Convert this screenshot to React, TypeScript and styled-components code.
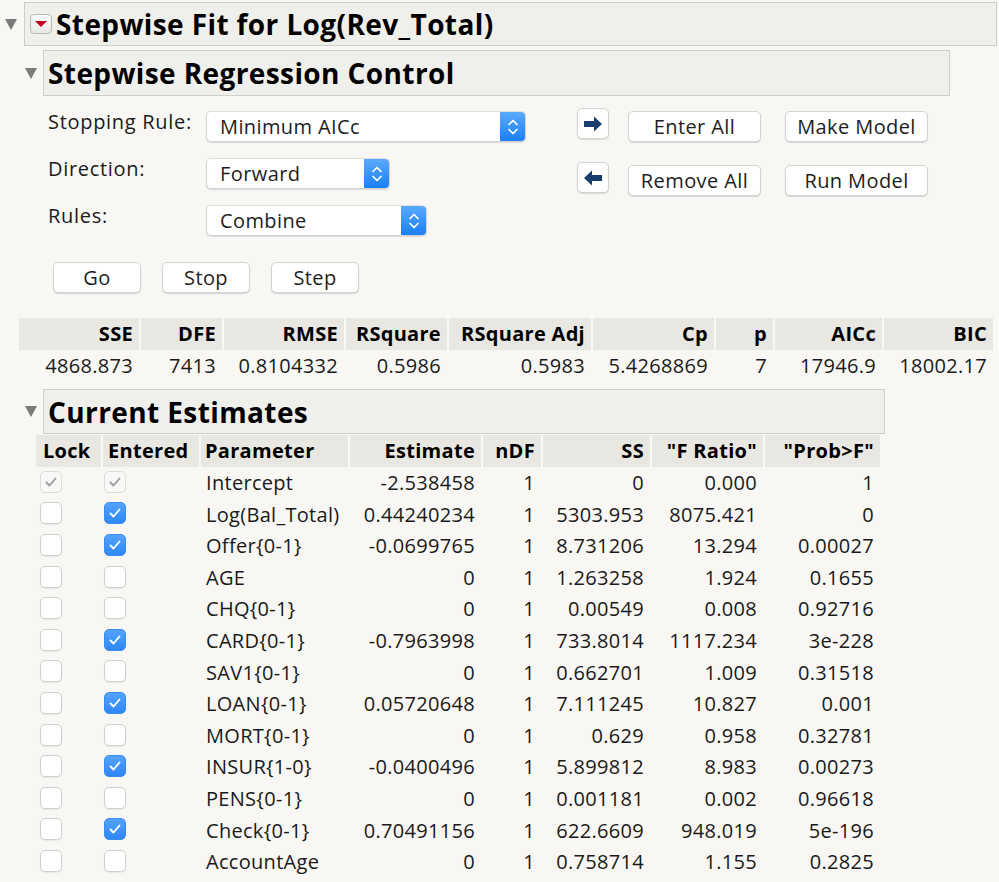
import React from "react";
import styled, { createGlobalStyle } from "styled-components";

const Global = createGlobalStyle`
  html, body { margin: 0; padding: 0; background: #f8f7f3; }
  body { font-family: "Open Sans", Lato, "Noto Sans", sans-serif; color: #111; }
  * { box-sizing: border-box; }
`;

const Page = styled.div`
  width: 999px;
  height: 882px;
  overflow: hidden;
  padding-top: 2px;
`;

const OutlineHead = styled.div<{ $indent: number }>`
  display: flex;
  align-items: center;
  margin-left: ${(p) => p.$indent}px;
`;

const Disclosure = styled.span<{ $gap: number }>`
  width: 0;
  height: 0;
  border-left: 6px solid transparent;
  border-right: 6px solid transparent;
  border-top: 11px solid #7b7b7b;
  margin-right: ${(p) => p.$gap}px;
  flex: none;
`;

const TitleBox = styled.div<{ $w: number; $h: number; $pad: number }>`
  width: ${(p) => p.$w}px;
  height: ${(p) => p.$h}px;
  padding-left: ${(p) => p.$pad}px;
  display: flex;
  align-items: center;
  gap: 4px;
  background: #efefeb;
  border: 1px solid #cfcfca;
  font-weight: 700;
  font-size: 28px;
  letter-spacing: 0.4px;
  color: #000;
  white-space: nowrap;
`;

const MenuIcon = styled.span`
  width: 22px;
  height: 20px;
  border: 1px solid #b9b9b6;
  border-radius: 4px;
  background: linear-gradient(#fbfbfb, #e9e9e7);
  display: flex;
  align-items: center;
  justify-content: center;
  flex: none;
  &::after {
    content: "";
    width: 0;
    height: 0;
    border-left: 6px solid transparent;
    border-right: 6px solid transparent;
    border-top: 6px solid #c4001c;
  }
`;

const Controls = styled.div`
  display: flex;
  align-items: flex-start;
  margin-left: 48px;
  padding-top: 15px;
`;

const Settings = styled.div`
  display: grid;
  grid-template-columns: 158px auto;
  grid-auto-rows: 31px;
  row-gap: 16px;
  width: 529px;
`;

const Label = styled.div`
  font-size: 20px;
  letter-spacing: 0.7px;
  line-height: 22px;
  color: #1a1a1a;
  margin-top: 0;
`;

const Select = styled.div<{ $w: number }>`
  width: ${(p) => p.$w}px;
  height: 31px;
  display: flex;
  background: #fff;
  border-radius: 5px;
  border: 1px solid #d3d3d3;
  border-top-color: #dedede;
  box-shadow: 0 1px 1px rgba(0, 0, 0, 0.12);
  overflow: hidden;
`;

const SelectText = styled.div`
  flex: 1;
  padding-left: 13px;
  font-size: 20px;
  letter-spacing: 0.4px;
  line-height: 29px;
  color: #1d1d1d;
`;

const Stepper = styled.div`
  width: 25px;
  background: linear-gradient(#5aaafc, #1b7ff6);
  display: flex;
  align-items: center;
  justify-content: center;
`;

const Actions = styled.div`
  display: grid;
  grid-template-columns: 32px 152px 186px;
  grid-auto-rows: 34px;
  align-content: start;
  row-gap: 20px;
  margin-top: -3px;
  align-items: start;
`;

const ArrowButton = styled.div`
  width: 32px;
  height: 31px;
  background: #fff;
  border: 1px solid #d3d3d3;
  border-radius: 5px;
  box-shadow: 0 1px 1px rgba(0, 0, 0, 0.12);
  display: flex;
  align-items: center;
  justify-content: center;
`;

const Button = styled.div<{ $w: number; $ml?: number; $mt?: number }>`
  width: ${(p) => p.$w}px;
  height: 31px;
  margin-left: ${(p) => p.$ml ?? 0}px;
  margin-top: ${(p) => p.$mt ?? 0}px;
  background: #fff;
  border: 1px solid #d3d3d3;
  border-radius: 5px;
  box-shadow: 0 1px 1px rgba(0, 0, 0, 0.14);
  font-size: 20px;
  letter-spacing: 0.4px;
  line-height: 29px;
  text-align: center;
  color: #1d1d1d;
  white-space: nowrap;
`;

const RunRow = styled.div`
  display: flex;
  gap: 21px;
  margin: 26px 0 0 53px;
`;

const Grid = styled.div<{ $cols: string; $left: number; $top: number }>`
  display: grid;
  grid-template-columns: ${(p) => p.$cols};
  column-gap: 2px;
  margin-left: ${(p) => p.$left}px;
  margin-top: ${(p) => p.$top}px;
`;

const HeadCell = styled.div<{ $align?: string; $pad?: number }>`
  height: 32px;
  background: #e8e7e1;
  font-weight: 700;
  font-size: 20px;
  letter-spacing: 0.3px;
  line-height: 32px;
  color: #000;
  text-align: ${(p) => p.$align ?? "right"};
  padding: 0 ${(p) => (p.$align === "left" ? 0 : 6)}px 0 ${(p) => p.$pad ?? 0}px;
  white-space: nowrap;
  overflow: hidden;
`;

const Cell = styled.div<{ $align?: string; $pad?: number; $h?: number }>`
  height: ${(p) => p.$h ?? 31.6}px;
  font-size: 20px;
  letter-spacing: 0.3px;
  line-height: ${(p) => p.$h ?? 31.6}px;
  color: #1a1a1a;
  padding: 0 ${(p) => (p.$align === "left" ? 0 : 6)}px 0 ${(p) => p.$pad ?? 0}px;
  white-space: nowrap;
  display: flex;
  align-items: center;
  justify-content: ${(p) => (p.$align === "left" ? "flex-start" : "flex-end")};
`;

const Box = styled.span<{ $state: "off" | "on" | "dis" }>`
  width: 22px;
  height: 22px;
  border-radius: 5px;
  display: inline-flex;
  align-items: center;
  justify-content: center;
  background: ${(p) => (p.$state === "on" ? "linear-gradient(#54a3fb, #2f87f6)" : p.$state === "dis" ? "#f8f8f7" : "#fff")};
  border: 1px solid ${(p) => (p.$state === "on" ? "#3a8cf0" : p.$state === "dis" ? "#dcdcda" : "#cfcfcf")};
  box-shadow: ${(p) => (p.$state === "off" ? "0 1px 1px rgba(0,0,0,0.06)" : "none")};
  margin-top: -2px;
`;

const Spacer = styled.div`
  height: 4px;
`;

const StepperIcon = () => (
  <svg width="14" height="22" viewBox="0 0 14 22" fill="none" stroke="#fff" strokeWidth="1.7" strokeLinecap="round" strokeLinejoin="round">
    <path d="M3 8.5l4-4 4 4" />
    <path d="M3 13.5l4 4 4-4" />
  </svg>
);

const ArrowIcon = ({ dir }: { dir: "right" | "left" }) => (
  <svg width="20" height="16" viewBox="0 0 20 16" style={dir === "left" ? { transform: "scaleX(-1)" } : undefined}>
    <path d="M1 5h10V0.5l8 7.5-8 7.5V11H1z" fill="#173e6d" />
  </svg>
);

const Check = ({ color }: { color: string }) => (
  <svg width="16" height="16" viewBox="0 0 16 16" fill="none" stroke={color} strokeWidth="1.9" strokeLinecap="round" strokeLinejoin="round">
    <path d="M3.5 8.5l3 3 6-7" />
  </svg>
);

const CheckBox = ({ state }: { state: "off" | "on" | "dis" }) => (
  <Box $state={state}>
    {state === "on" && <Check color="#fff" />}
    {state === "dis" && <Check color="#9c9c9c" />}
  </Box>
);

const DropDown = ({ w, text }: { w: number; text: string }) => (
  <Select $w={w}>
    <SelectText>{text}</SelectText>
    <Stepper>
      <StepperIcon />
    </Stepper>
  </Select>
);

const statCols = "120px 81px 120px 101px 142px 121px 57px 107px 109px";
const statHeads = ["SSE", "DFE", "RMSE", "RSquare", "RSquare Adj", "Cp", "p", "AICc", "BIC"];
const statVals = ["4868.873", "7413", "0.8104332", "0.5986", "0.5983", "5.4268869", "7", "17946.9", "18002.17"];

const estCols = "65px 96px 147px 131px 58px 107px 111px 115px";

type Row = [boolean | null, string, string, string, string, string];
const rows: Row[] = [
  [null, "Intercept", "-2.538458", "0", "0.000", "1"],
  [true, "Log(Bal_Total)", "0.44240234", "5303.953", "8075.421", "0"],
  [true, "Offer{0-1}", "-0.0699765", "8.731206", "13.294", "0.00027"],
  [false, "AGE", "0", "1.263258", "1.924", "0.1655"],
  [false, "CHQ{0-1}", "0", "0.00549", "0.008", "0.92716"],
  [true, "CARD{0-1}", "-0.7963998", "733.8014", "1117.234", "3e-228"],
  [false, "SAV1{0-1}", "0", "0.662701", "1.009", "0.31518"],
  [true, "LOAN{0-1}", "0.05720648", "7.111245", "10.827", "0.001"],
  [false, "MORT{0-1}", "0", "0.629", "0.958", "0.32781"],
  [true, "INSUR{1-0}", "-0.0400496", "5.899812", "8.983", "0.00273"],
  [false, "PENS{0-1}", "0", "0.001181", "0.002", "0.96618"],
  [true, "Check{0-1}", "0.70491156", "622.6609", "948.019", "5e-196"],
  [false, "AccountAge", "0", "0.758714", "1.155", "0.2825"],
];

export default function App() {
  return (
    <Page>
      <Global />
      <OutlineHead $indent={5}>
        <Disclosure $gap={7} />
        <TitleBox $w={973} $h={44} $pad={5}>
          <MenuIcon />
          Stepwise Fit for Log(Rev_Total)
        </TitleBox>
      </OutlineHead>
      <Spacer />
      <OutlineHead $indent={25}>
        <Disclosure $gap={6} />
        <TitleBox $w={907} $h={46} $pad={4}>
          Stepwise Regression Control
        </TitleBox>
      </OutlineHead>
      <Controls>
        <Settings>
          <Label>Stopping Rule:</Label>
          <DropDown w={320} text="Minimum AICc" />
          <Label>Direction:</Label>
          <DropDown w={184} text="Forward" />
          <Label>Rules:</Label>
          <DropDown w={221} text="Combine" />
        </Settings>
        <Actions>
          <ArrowButton>
            <ArrowIcon dir="right" />
          </ArrowButton>
          <Button $w={133} $ml={19} $mt={3}>Enter All</Button>
          <Button $w={143} $ml={24} $mt={3}>Make Model</Button>
          <ArrowButton>
            <ArrowIcon dir="left" />
          </ArrowButton>
          <Button $w={133} $ml={19} $mt={3}>Remove All</Button>
          <Button $w={143} $ml={24} $mt={3}>Run Model</Button>
        </Actions>
      </Controls>
      <RunRow>
        <Button $w={88}>Go</Button>
        <Button $w={88}>Stop</Button>
        <Button $w={88}>Step</Button>
      </RunRow>
      <Grid $cols={statCols} $left={19} $top={25}>
        {statHeads.map((h) => (
          <HeadCell key={h}>{h}</HeadCell>
        ))}
        {statVals.map((v, i) => (
          <Cell key={i} $h={31}>{v}</Cell>
        ))}
      </Grid>
      <Spacer />
      <Spacer />
      <OutlineHead $indent={25}>
        <Disclosure $gap={6} />
        <TitleBox $w={842} $h={45} $pad={4}>
          Current Estimates
        </TitleBox>
      </OutlineHead>
      <Grid $cols={estCols} $left={36} $top={1}>
        <HeadCell $align="left" $pad={7}>Lock</HeadCell>
        <HeadCell $align="left" $pad={5}>Entered</HeadCell>
        <HeadCell $align="left" $pad={4}>Parameter</HeadCell>
        <HeadCell>Estimate</HeadCell>
        <HeadCell>nDF</HeadCell>
        <HeadCell>SS</HeadCell>
        <HeadCell>"F Ratio"</HeadCell>
        <HeadCell>"Prob&gt;F"</HeadCell>
        {rows.map(([entered, name, est, ss, f, p]) => (
          <React.Fragment key={name}>
            <Cell $align="left" $pad={4}>
              <CheckBox state={entered === null ? "dis" : "off"} />
            </Cell>
            <Cell $align="left" $pad={1}>
              <CheckBox state={entered === null ? "dis" : entered ? "on" : "off"} />
            </Cell>
            <Cell $align="left" $pad={5}>{name}</Cell>
            <Cell>{est}</Cell>
            <Cell $pad={0}>1</Cell>
            <Cell>{ss}</Cell>
            <Cell>{f}</Cell>
            <Cell>{p}</Cell>
          </React.Fragment>
        ))}
      </Grid>
    </Page>
  );
}
